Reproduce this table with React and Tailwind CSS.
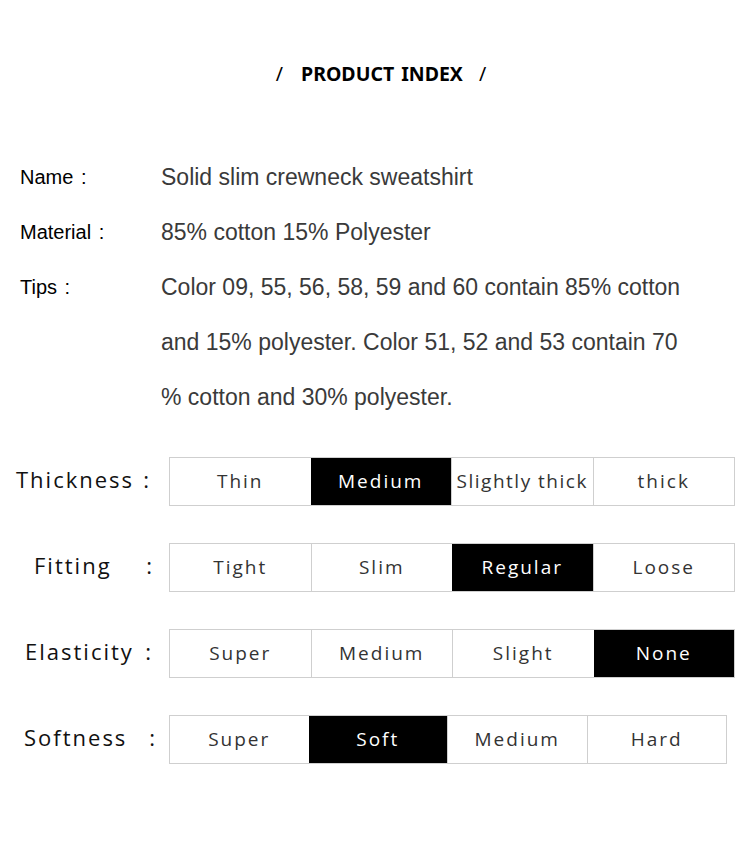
import React from "react";

const info = [
  { label: "Name :", lines: ["Solid slim crewneck sweatshirt"] },
  { label: "Material :", lines: ["85% cotton 15% Polyester"] },
  {
    label: "Tips :",
    lines: [
      "Color 09, 55, 56, 58, 59 and 60 contain 85% cotton",
      "and 15% polyester. Color 51, 52 and 53 contain 70",
      "% cotton and 30% polyester.",
    ],
  },
];

const scales = [
  { label: "Thickness", pad: "pl-[16px]", colon: "ml-auto pr-[18px]", width: "w-[566px]", options: ["Thin", "Medium", "Slightly thick", "thick"], active: 1 },
  { label: "Fitting", pad: "pl-[34px]", colon: "ml-auto pr-[15px]", width: "w-[566px]", options: ["Tight", "Slim", "Regular", "Loose"], active: 2 },
  { label: "Elasticity", pad: "pl-[25px]", colon: "ml-auto pr-[16px]", width: "w-[566px]", options: ["Super", "Medium", "Slight", "None"], active: 3 },
  { label: "Softness", pad: "pl-[24px]", colon: "ml-auto pr-[12px]", width: "w-[558px]", options: ["Super", "Soft", "Medium", "Hard"], active: 1 },
];

const ScaleRow = ({ row }) => (
  <div className="flex items-center h-[49px]">
    <div className="flex items-center w-[169px] h-full pb-[4px] text-[22px] tracking-[2px] text-[#111]">
      <span className={row.pad}>{row.label}</span>
      <span className={row.colon}>:</span>
    </div>
    <div className={`flex h-full border border-[#cfcfcf] ${row.width}`}>
      {row.options.map((opt, i) => (
        <div
          key={opt + i}
          className={
            i === row.active
              ? "flex-1 flex items-center justify-center bg-black text-white text-[19px] tracking-[2px]"
              : i === 0
              ? "flex-1 flex items-center justify-center bg-white text-[#333] text-[19px] tracking-[2px]"
              : "flex-1 flex items-center justify-center bg-white text-[#333] text-[19px] tracking-[2px] border-l border-[#cfcfcf]"
          }
        >
          {opt === "Slightly thick" ? <span className="tracking-[1.5px]">{opt}</span> : opt}
        </div>
      ))}
    </div>
  </div>
);

export default function App() {
  return (
    <div className="w-[750px] h-[855px] bg-white" style={{ fontFamily: '"Liberation Sans", Arial, sans-serif' }}>
      {/* title */}
      <div className="pt-[60px] pl-[12px] h-[88px] flex items-start justify-center text-[19.5px] text-black leading-[28px]" style={{ fontFamily: '"Noto Sans", sans-serif' }}>
        <span className="mr-[18px]">/</span>
        <span className="font-bold [word-spacing:2px]">PRODUCT INDEX</span>
        <span className="ml-[16px]">/</span>
      </div>

      {/* product info */}
      <div className="mt-[62px] pl-[20px]">
        {info.map((row) => (
          <div key={row.label} className="flex">
            <div className="w-[141px] text-[20px] leading-[55px] text-black [word-spacing:2px]">{row.label}</div>
            <div className="text-[23px] leading-[55px] text-[#3a3a3a]">
              {row.lines.map((l) => (
                <div key={l}>{l}</div>
              ))}
            </div>
          </div>
        ))}
      </div>

      {/* scales */}
      <div className="mt-[32px] flex flex-col gap-[37px]" style={{ fontFamily: '"Open Sans", sans-serif' }}>
        {scales.map((row) => (
          <ScaleRow key={row.label} row={row} />
        ))}
      </div>
    </div>
  );
}
